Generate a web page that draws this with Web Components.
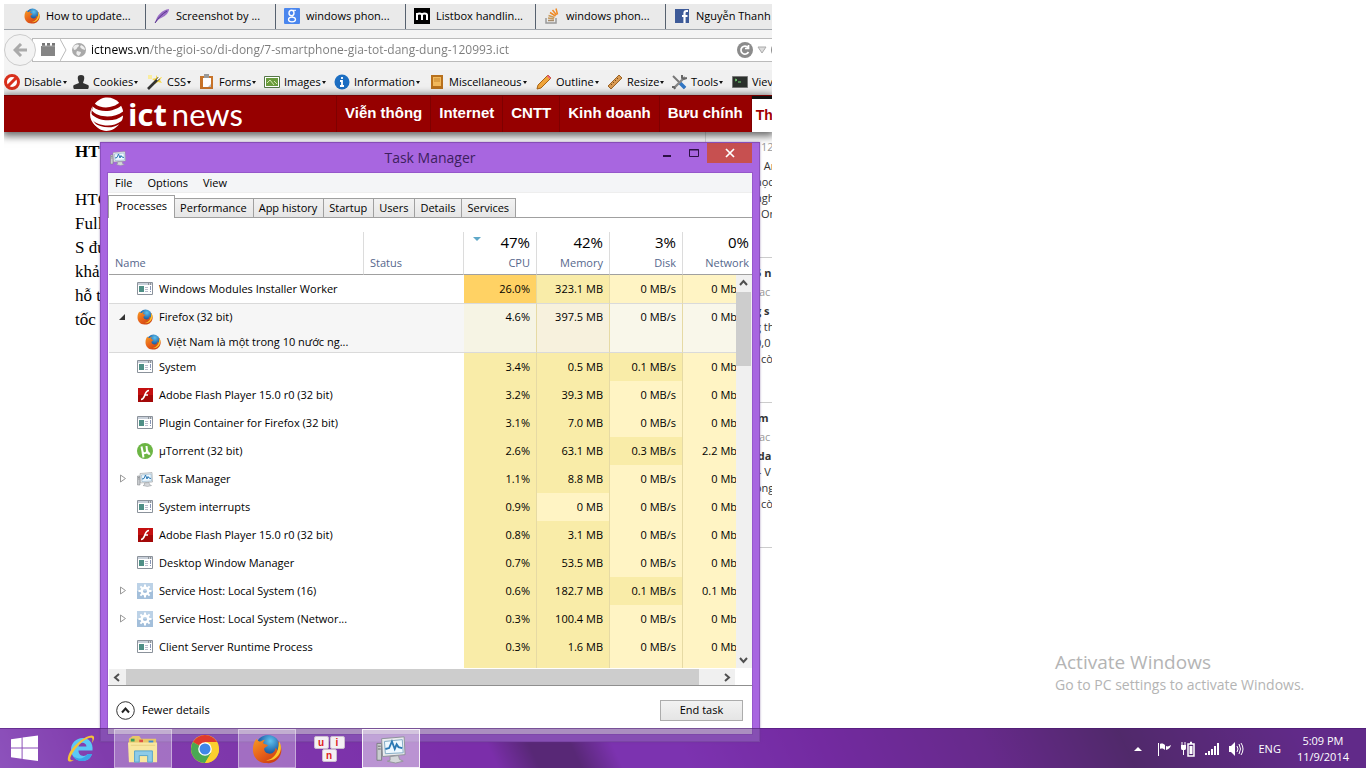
<!DOCTYPE html>
<html lang="en">
<head>
<meta charset="utf-8">
<title>Desktop</title>
<style>
html,body{margin:0;height:100%;background:#fff}
body{font:11px/16px "Open Sans","Noto Sans",sans-serif;color:#000;overflow:hidden}
</style>
</head>
<body>
<win-desktop>
  <browser-window></browser-window>
  <task-manager heading="Task Manager">
    <process-table></process-table>
  </task-manager>
  <activation-note></activation-note>
  <task-bar slot="bar"></task-bar>
</win-desktop>
<script>
const define=(name,html,setup)=>customElements.define(name,class extends HTMLElement{
  connectedCallback(){
    if(this.shadowRoot)return;
    const root=this.attachShadow({mode:'open'});
    const t=document.createElement('template');
    t.innerHTML=typeof html==='function'?html(this):html;
    root.append(t.content.cloneNode(true));
    if(setup)setup(this,root);
  }
});
const reset=':host,*{box-sizing:border-box}button{font:inherit;color:inherit;background:none;border:0;padding:0;margin:0;cursor:default}a{color:inherit;text-decoration:none}';

/* ---------- icons ---------- */
const firefox=`<svg viewBox="0 0 32 32"><defs><radialGradient id="b" cx=".6" cy=".25" r=".8"><stop offset="0" stop-color="#5fc3ee"/><stop offset=".55" stop-color="#2166ac"/><stop offset="1" stop-color="#15245c"/></radialGradient><linearGradient id="f" x1="0" y1="0" x2=".8" y2="1"><stop offset="0" stop-color="#f59a23"/><stop offset=".5" stop-color="#e8641b"/><stop offset="1" stop-color="#c93a10"/></linearGradient></defs><circle cx="17" cy="14" r="13" fill="url(#b)"/><path d="M5 5c1 2 2 3 4 3 2-1 3-2 5-2-2 2-2 3-2 4 2 1 4 1 5 2-1 2-4 2-4 4 0 3 3 5 6 5 4 0 6-3 6-6 1 0 2 2 2 3 2-3 2-7 0-11 4 4 5 9 4 13-2 8-9 12-16 11C6 31 1 24 1 17c0-5 1-9 4-12z" fill="url(#f)"/><path d="M29 8c3 5 2 11-1 15-3 4-8 6-13 5 8-1 13-7 14-20z" fill="#fbc52c"/></svg>`;
const exe=`<svg viewBox="0 0 16 16"><path d="M.5 1.500h15v12H.5z" fill="#fff" stroke="#8b929b"/><path d="M1 2h14v2H1z" fill="#c9d0da"/><path d="M11 3h1m1 0h1" stroke="#555"/><path d="M2 5h5v6H2z" fill="#4f8f86"/><path d="M8 6.500h3M8 8.500h3M8 10.500h3" stroke="#bbc"/><path d="M13.500 5v4m0 1v1" stroke="#8795b5"/></svg>`;
const monitor=`<svg viewBox="0 0 32 32"><path d="M1 10h5v18H1z" fill="#c9cccf" stroke="#7b7e82"/><path d="M2 13h3M2 16h3" stroke="#666"/><path d="M6 5l24-2 1 19-24 2z" fill="#e9ebed" stroke="#8b9197"/><path d="M9 8l19-2 1 14-19 1z" fill="#eef8ff" stroke="#7fa9c4"/><path d="M10 16l4-1 3-7 3 8 2-5 2 3 4 1" fill="none" stroke="#2c79b4" stroke-width="2"/><path d="M15 24l9-1 1 4 4 2-8 2-9-2 3-1z" fill="#d4d7da" stroke="#92969a"/></svg>`;
const gear=`<svg viewBox="0 0 16 16"><path d="M0 0h16v16H0z" fill="#a3bfdb"/><path d="M0 0h16v8H0z" fill="#bcd2e7"/><circle cx="8" cy="8" r="3.300" fill="none" stroke="#fff" stroke-width="2.400"/><path d="M8 1.500v2.500m0 8v2.500M1.500 8H4m8 0h2.500M3.400 3.400l1.800 1.800m5.600 5.600l1.800 1.800m0-9.200l-1.800 1.800m-5.600 5.600l-1.800 1.800" stroke="#fff" stroke-width="2"/></svg>`;
const icons={
firefox,exe,monitor,gear,
flash:`<svg viewBox="0 0 16 16"><path d="M1 1h15v14H1z" fill="#c40f10"/><path d="M1 8h15v7H1z" fill="#a30808"/><path d="M12 3.500c-3 0-3.500 3-4.500 5.500S6 12.500 4 12.500M8 8h3" fill="none" stroke="#fff" stroke-width="1.700"/></svg>`,
utorrent:`<svg viewBox="0 0 16 16"><circle cx="8" cy="8" r="8" fill="#6cb544"/><path d="M4.500 3.500l1 5c.5 2.500 4.500 2 4.500-.5l-.5-5m.7 4.500c.3 2 1.500 3.500 3 3.300M5.500 9l1 5.500" fill="none" stroke="#fff" stroke-width="2"/></svg>`,
feather:`<svg viewBox="0 0 16 16"><path d="M1 15C3 7 8 2 15 1c0 4-4 7-6 8-2 1-4 2-5 3z" fill="#9b6fc6"/><path d="M1 15C4 10 8 6 13 3" stroke="#54308a" fill="none"/></svg>`,
google:`<svg viewBox="0 0 16 16"><rect width="16" height="16" rx="1" fill="#4a86ee"/><ellipse cx="7.500" cy="5" rx="2.500" ry="2.700" fill="none" stroke="#fff" stroke-width="1.400"/><path d="M9 2.300h3M9 7.500c-2 1 0 1.500 1 2.500" stroke="#fff" fill="none"/><ellipse cx="8" cy="11.500" rx="3.500" ry="2.300" fill="none" stroke="#fff" stroke-width="1.300"/></svg>`,
mlogo:`<svg viewBox="0 0 16 16"><path d="M0 0h16v16H0z"/><path d="M3 12V5m0 2c0-2 5-2 5 0v5m0-5c0-2 5-2 5 0v5" stroke="#fff" stroke-width="2" fill="none"/></svg>`,
stack:`<svg viewBox="0 0 16 16"><path d="M2 10v5h10v-5" fill="none" stroke="#999" stroke-width="1.500"/><path d="M4 12.500h6" stroke="#a78b68" stroke-width="1.500"/><path d="M4 10l6 1M4.500 7.500l6 2" stroke="#c99a5a" stroke-width="1.500"/><path d="M6 4.500l5.500 3.500M8.500 2l4 5M12 .5l1.500 6" stroke="#f08a24" stroke-width="1.500"/></svg>`,
facebook:`<svg viewBox="0 0 16 16"><path d="M1 1h14v14H1z" fill="#3d5a98"/><path d="M14 3h-1.500c-1.500 0-2 .8-2 2v10M8 8h5.500" stroke="#fff" stroke-width="2.200" fill="none"/></svg>`,
puzzle:`<svg viewBox="0 0 16 16"><path d="M1 4h14v10H1z" fill="#858585"/><path d="M2 1h3v3H2zm5 0h3v3H7zm5 0h3v3h-3z" fill="#777"/><path d="M2 4h13" stroke="#aaa"/></svg>`,
globe:`<svg viewBox="0 0 16 16"><circle cx="8" cy="8" r="7" fill="#a9a9a9"/><path d="M2 5c2-3 5-3 6-2 0 2-2 2-2 3S4 8 3 8zm8-2c3 1 4 3 4 5l-3-1-2-2zM6 9l4 1c0 2-2 3-2 4C5 13 5 11 6 9z" fill="#eee"/></svg>`,
disable:`<svg viewBox="0 0 16 16"><circle cx="8" cy="8" r="6.500" fill="#fff" stroke="#d8301c" stroke-width="3"/><path d="M3.500 12.500l9-9" stroke="#d8301c" stroke-width="3"/></svg>`,
cookies:`<svg viewBox="0 0 16 16"><path d="M8 1c5 0 3 5 2 8l5 2c1 0 1 3 0 4H1c-1-1-1-4 0-4l5-2C5 6 3 1 8 1z" fill="#333"/></svg>`,
css:`<svg viewBox="0 0 16 16"><path d="M9 1l2 3 4-1-2 3 2 3-4-1-3 2V7L5 5l4-1z" fill="#f7d847"/><path d="M1 1h4v4H1z" fill="#f9ec9f"/><path d="M1 15L12 4" stroke="#333" stroke-width="2.600"/><path d="M10 6l3-3" stroke="#fff" stroke-width="1.500"/></svg>`,
forms:`<svg viewBox="0 0 16 16"><path d="M1 2h13v13H1z" fill="#c77329"/><path d="M4 4h8v9H4z" fill="#fff"/><path d="M5 0h5v4H5z" fill="#999"/><path d="M9 13l3-3v3z" fill="#bbb"/></svg>`,
images:`<svg viewBox="0 0 16 16"><path d="M.5 2.500h15v11H.5z" fill="#fff" stroke="#557748"/><path d="M2 4h12v8H2z" fill="#6a9c3d"/><path d="M3 9l3-3 4 5m0-4l3 3" stroke="#d4e8b0" fill="none"/></svg>`,
info:`<svg viewBox="0 0 16 16"><circle cx="8" cy="8" r="7.500" fill="#1c6ec2"/><path d="M8 3v2M6 7h2v5M6 12h4" stroke="#fff" stroke-width="1.800" fill="none"/></svg>`,
misc:`<svg viewBox="0 0 16 16"><path d="M2 1h12v14H2z" fill="#b8711d"/><path d="M4 3h8v9H4z" fill="#f2b95c"/><path d="M5 5h6M5 7h6" stroke="#c8862d"/></svg>`,
outline:`<svg viewBox="0 0 16 16"><path d="M1 15l1-4L12 1l3 3L5 14z" fill="#f0a53a" stroke="#a96516"/><path d="M11 2l3 3 1-1-3-3z" fill="#e58"/></svg>`,
resize:`<svg viewBox="0 0 16 16"><path d="M1 12L12 1l3 3L4 15z" fill="#d99a52" stroke="#9c6426"/><path d="M4 10l1 1m1-3l1 1m1-3l1 1m1-3l1 1" stroke="#7a4c17"/></svg>`,
tools:`<svg viewBox="0 0 16 16"><path d="M2 2l12 12" stroke="#777" stroke-width="2"/><path d="M9 9l5 5" stroke="#3277c5" stroke-width="3.500"/><path d="M14 3L3 14" stroke="#888" stroke-width="2.400"/><path d="M11 1v3l2 1 3-1M1 13h2l1 2" stroke="#666" stroke-width="2" fill="none"/></svg>`,
view:`<svg viewBox="0 0 16 16"><path d="M.5 2.500h15v11H.5z" fill="#2b302c" stroke="#777"/><path d="M3 5l2 1-2 1M6 8h3" stroke="#7d7" fill="none"/></svg>`,
winlogo:`<svg viewBox="0 0 28 28"><path d="M0 4.500l11-1.600V13H0zM12 2.700L28 .5V13H12zM0 14h11v10.500L0 23zM12 14h16v13l-16-2.200z" fill="#fff"/></svg>`,
ie:`<svg viewBox="0 0 30 30"><path d="M21.500 20c-1.500 2.500-6 2.800-8 0-1-1.500-1-3-1-3.500h14c1-8-4-12.500-10-12.500S5 9 5 15.500 10 27 16 27c5 0 8.500-2.500 10-7zM12.500 12.500c.5-5 7.500-5 8 0z" fill="#5cc8f6" fill-rule="evenodd"/><path d="M21.500 20h4.500c-1.500 4.500-5 7-10 7-4 0-7.500-2-9-5 5 4 11 3 14.500-2z" fill="#3aa4e8"/><path d="M26 9c4-6 2-9-3-7C16 4 6 13 3 20c-3 8 0 9 5 6-4 1-5-1-2-6C10 13 17 6 23 4c4-1 4 1 3 5z" fill="#f6c337"/></svg>`,
explorer:`<svg viewBox="0 0 32 30"><path d="M1 4l4-3h7l2 3h16v24H1z" fill="#e8c767"/><path d="M3 4h4v3H3z" fill="#39a05a"/><path d="M12 5h4v3h-4z" fill="#e05242"/><path d="M22 6h5v3h-5z" fill="#3c8bd0"/><path d="M0 8h31v21H1z" fill="#f9e7a0"/><path d="M7 29V17h19v12h-5v-7h-9v7z" fill="#8ecbe8" stroke="#54a3cd"/><path d="M3 11h26" stroke="#e7cf80"/></svg>`,
chrome:`<svg viewBox="0 0 30 30"><circle cx="15" cy="15" r="14" fill="#fbd02e"/><path d="M15 15L2.900 8A14 14 0 0 1 27.100 8H15z" fill="#df3a2d"/><path d="M15 15L2.900 8A14 14 0 0 0 15 29l6-10z" fill="#4aa853"/><path d="M15 8h12.100L29 15c0 8-6 14-14 14l6-10z" fill="#fbd02e"/><circle cx="15" cy="15" r="6.800" fill="#fff"/><circle cx="15" cy="15" r="5.500" fill="#3f86e8"/></svg>`,
flag:`<svg viewBox="0 0 16 16"><path d="M2.500 2v13" stroke="#fff"/><path d="M4 3c2-1 4 0 5 1v5C8 8 6 7 4 8zM10 5c2 1 3 0 5-1-1 3-2 4-5 5z" fill="#fff"/></svg>`,
battery:`<svg viewBox="0 0 16 16"><path d="M8 3h6v12H8zM10 1.500h2" fill="none" stroke="#fff" stroke-width="1.500"/><path d="M9.500 5h3v8h-3zM1 4h5v3c0 2-1 2-2 2v5H3V9C2 9 1 9 1 7z" fill="#fff"/><path d="M2 1v3m3-3v3" stroke="#fff"/></svg>`,
signal:`<svg viewBox="0 0 16 16"><path d="M1 12h2v2H1zm3-2h2v4H4zm3-2h2v6H7zm3-3h2v9h-2zm3-3h2v12h-2z" fill="#fff"/></svg>`,
volume:`<svg viewBox="0 0 16 16"><path d="M1 5h2l4-4v14l-4-4H1z" fill="#fff"/><path d="M9 5q2 3 0 6m2-8q3 5 0 10m2-11q4 6 0 12" fill="none" stroke="#fff"/></svg>`,
reload:`<svg viewBox="0 0 16 16"><circle cx="8" cy="8" r="8" fill="#8b8b8b"/><path d="M11 5.500A4 4 0 1 0 11.500 10M11.500 3v3.500H8" fill="none" stroke="#fff" stroke-width="1.700"/></svg>`
};
define('app-icon',el=>`<style>:host{display:inline-block;flex:none;width:var(--icon,16px);height:var(--icon,16px)}svg{display:block;width:100%;height:100%}</style>${icons[el.getAttribute('name')]||''}`);

/* ---------- desktop ---------- */
define('win-desktop',`<style>${reset}
:host{display:flex;flex-direction:column;height:100vh;position:relative;overflow:hidden;background:#fff}
main{flex:1;position:relative}
</style><main><slot></slot></main><slot name="bar"></slot>`);

define('activation-note',`<style>
:host{position:absolute;right:56px;bottom:33px;width:255px;white-space:nowrap;color:#b4b4b4}
h2,p{margin:0;font-weight:400}h2{font-size:19px;line-height:26px}p{font-size:14px;line-height:20px}
</style><h2>Activate Windows</h2><p>Go to PC settings to activate Windows.</p>`);

/* ---------- browser ---------- */
define('browser-tab',el=>`<style>${reset}
:host{display:block;flex:0 0 130px}
:host(:last-of-type){flex:1 1 0;min-width:0}
button{display:flex;align-items:center;gap:6px;width:100%;height:25px;padding:0 0 1px 8px;border-right:1px solid #56616f;white-space:nowrap}
:host(:last-of-type) button{border-right:0}
</style><button role="tab"><app-icon name="${el.getAttribute('icon')}"></app-icon><slot></slot></button>`);

define('tool-item',el=>`<style>${reset}
:host{display:block}
button{display:flex;align-items:center;gap:4px;height:24px;white-space:nowrap}
.t{display:flex;align-items:center;gap:1px}
.t::after{content:"";border:2px solid transparent;border-top:3px solid #111;border-bottom:0}
:host([icon=view]) .t::after{display:none}
</style><button><app-icon name="${el.getAttribute('icon')}"></app-icon><span class="t"><slot></slot></span></button>`);

define('browser-window',`<style>${reset}
:host{display:block;position:absolute;left:4px;top:4px;bottom:0;width:768px;overflow:hidden}
.tabs{display:flex;padding-left:12px;background:#eaeaea;border-bottom:1px solid #a3a8ae}
nav.url{display:flex;align-items:center;height:40px;background:#f4f4f4}
.back{display:grid;place-items:center;width:32px;height:32px;border:1px solid #ccc;border-radius:50%;background:#f3f3f3;z-index:1;flex:none}
.back svg{width:14px;height:14px}
.box{flex:1;display:flex;align-items:center;height:24px;margin-left:-4px;padding-left:7px;margin-right:-8px;border:1px solid #bbb;background:#fff;gap:4px}
.box app-icon:last-child{margin-right:-8px}
.sep{width:7px;height:22px;flex:none}
input{flex:1;min-width:0;border:0;outline:0;padding:0;height:20px;font:inherit;font-size:12px;line-height:20px;background:linear-gradient(90deg,#000 58px,#7b7b7b 58px) text;-webkit-text-fill-color:transparent}
.drop{width:10px;height:8px}
.tools{display:grid;grid-template-columns:69px 74px 52px 65px 70px 95px 107px 71px 64px 61px 60px;height:25px;background:#f0f0f0}
header{display:flex;height:37px;background:#960000;border-top:1px solid #740000;position:relative;z-index:1;box-shadow:0 2px 8px 2px rgba(0,0,0,.6)}
.logo{display:flex;align-items:center;flex:none;width:333px;padding-left:85px;gap:4px;color:#fff;border-right:1px solid #7f0000}
.logo svg{width:35px;height:35px;flex:none}
.logo span{display:flex;gap:5px}
.logo b{font:700 31px/36px "Open Sans",sans-serif}
.logo i{font:400 31px/36px Lato,sans-serif}
header a.n{font:700 15px/34px "Liberation Sans",Arial,sans-serif;color:#fff;padding:0 8px;border-right:1px solid #7f0000;white-space:nowrap;flex:none}
header a.n.on{flex:1;border-top:3px solid #111;border-right:0;background:#fff;color:#a00000;font-size:14px;line-height:32px;padding:0 0 0 4px}
.page{display:flex;justify-content:space-between}
article{padding:8px 0 0 71px;font:17px/24px "Liberation Serif",serif;width:330px}
article h1{font:inherit;font-weight:700;margin:0 0 24px}
article p{margin:0}
aside{border-left:1px solid #ddd;width:67px;padding-left:49px;font-size:11px;line-height:16px;color:#333;white-space:nowrap}
aside p{margin:0}
aside section{border-bottom:1px solid #ccc;height:145px;padding-top:7px}
aside section.first{height:126px;padding-top:4px}
aside .d{color:#999;line-height:22px}
aside .n{padding-left:6px}
aside b{display:block}
</style>
<div class="tabs" role="tablist">
<browser-tab icon="firefox">How to update...</browser-tab><browser-tab icon="feather">Screenshot by ...</browser-tab><browser-tab icon="google">windows phon...</browser-tab><browser-tab icon="mlogo">Listbox handlin...</browser-tab><browser-tab icon="stack">windows phon...</browser-tab><browser-tab icon="facebook">Nguyễn Thanh</browser-tab></div>
<nav class="url"><button class="back" aria-label="Back"><svg viewBox="0 0 14 14"><path d="M8 1L2 7l6 6M2 7h12" fill="none" stroke="#aaa" stroke-width="3"/></svg></button>
<div class="box"><app-icon name="puzzle"></app-icon><svg class="sep" viewBox="0 0 7 22"><path d="M0 0l6 11-6 11" fill="none" stroke="#bbb"/></svg><app-icon name="globe"></app-icon>
<input aria-label="Address" value="ictnews.vn/the-gioi-so/di-dong/7-smartphone-gia-tot-dang-dung-120993.ict">
<app-icon name="reload"></app-icon><svg class="drop" viewBox="0 0 10 8"><path d="M1 1h8L5 7z" fill="#ddd" stroke="#aaa"/></svg><app-icon name="reload"></app-icon></div></nav>
<div class="tools"><tool-item icon="disable">Disable</tool-item><tool-item icon="cookies">Cookies</tool-item><tool-item icon="css">CSS</tool-item><tool-item icon="forms">Forms</tool-item><tool-item icon="images">Images</tool-item><tool-item icon="info">Information</tool-item><tool-item icon="misc">Miscellaneous</tool-item><tool-item icon="outline">Outline</tool-item><tool-item icon="resize">Resize</tool-item><tool-item icon="tools">Tools</tool-item><tool-item icon="view">Viev</tool-item></div>
<header><a class="logo" href="#"><svg viewBox="0 0 36 36"><path d="M6 7C13-2 25-1 31 6c-5 5-18 7-25 1z" fill="#fff"/><path d="M4 10c8 7 22 5 29-1 1 2 2 4 2 6-9 7-25 7-32-1zM2 17c8 9 25 9 33 2 0 3-1 5-2 6-9 7-25 5-31-3zM4 26c8 6 20 7 27 2-7 9-20 10-27-2z" fill="#fff"/><path d="M4 9C0 20 4 30 18 34 6 33-4 22 4 9z" fill="#fff"/></svg><span><b>ict</b><i style="font-style:normal">news</i></span></a>
<a class="n" href="#">Viễn thông</a><a class="n" href="#">Internet</a><a class="n" href="#">CNTT</a><a class="n" href="#">Kinh doanh</a><a class="n" href="#">Bưu chính</a><a class="n on" href="#">Th</a></header>
<div class="page"><article><h1>HTC</h1><p>HTC</p><p>Full</p><p>S đư</p><p>khả</p><p>hỗ tr</p><p>tốc</p></article>
<aside><section class="first"><p class="d n">12</p><p class="n">&nbsp;An</p><p>học</p><p>ngh</p><p class="n">On</p></section>
<section><b>5 n</b><p class="d">tac</p><b>g s</b><p>g th</p><p>0,0</p><p class="n">cò</p></section>
<section><b>&nbsp;m</b><p class="d">tac</p><b>&nbsp;da</b><p>&nbsp;- V</p><p>ong</p><p class="n">cò</p></section></aside></div>`);

/* ---------- task manager ---------- */
define('process-table',`<style>${reset}
:host{display:block}
.view{position:relative;overflow:hidden;padding-left:1px}
table{width:647px;table-layout:fixed;border-collapse:separate;border-spacing:0;white-space:nowrap}
th{height:43px;padding:0 6px 3px;border-bottom:1px solid #a0a0a0;font-weight:400;color:#56678c;text-align:left;vertical-align:bottom;border-right:1px solid #dcdcdc}
th.num{text-align:right;position:relative}
th big{display:block;font-size:15px;line-height:20px;color:#000;margin-bottom:3px}
th.sort::before{content:"";position:absolute;left:9px;top:5px;border:4px solid transparent;border-top-color:#5fa8c8;border-bottom:0}
td{height:28px;padding:0 6px;text-align:right}
td.num{background:#fff4c4;border-right:1px solid #e6daa4}
td.m{background:#f9eca8}td.h{background:#ffd264}
td.name{text-align:left;padding:0}
td.name div{display:flex;align-items:center;padding-left:28px;gap:6px;position:relative}
tr.open td{border-top:1px solid #dadada;padding-bottom:2px;background:#f6f6f6}
tr.child td{height:22px;vertical-align:top;border-bottom:1px solid #dadada;background:#f6f6f6}
tr.child td.name div{padding-left:36px;height:21px}
tr.open td.c,tr.child td.c{background:#f6f4e4}tr.open td.e,tr.child td.e{background:#f7f1dd}tr.open td.d,tr.child td.d{background:#f9f7ea}
tr.tail td{height:7px}
.x{position:absolute;left:9px;top:3px;width:9px;height:9px}
.x svg{display:block;width:9px;height:9px}
.bar{display:flex;background:#f0f0f0}
.bar button{display:grid;place-items:center;width:17px;height:16px}
.bar button svg{width:9px;height:9px}
.v{position:absolute;right:0;top:43px;bottom:0;width:16px;flex-direction:column}
.v i{height:74px;background:#cdcdcd;margin:0 1px 0 0}.v i+*{margin-top:auto}
.v button{width:15px;height:17px}
.hrow{margin:1px 17px 0 1px;height:16px}
.hrow i{flex:1;margin-right:19px;background:#cdcdcd}
</style>
<div class="view"><table><colgroup><col style="width:255px"><col style="width:100px"><col style="width:73px"><col style="width:73px"><col style="width:73px"><col style="width:73px"></colgroup>
<thead><tr><th>Name</th><th>Status</th><th class="num sort"><big>47%</big>CPU</th><th class="num"><big>42%</big>Memory</th><th class="num"><big>3%</big>Disk</th><th class="num"><big>0%</big>Network</th></tr></thead><tbody></tbody></table>
<div class="bar v"><button aria-label="Scroll up"><svg viewBox="0 0 9 9"><path d="M1 6l3.500-4L8 6" fill="none" stroke="#505050" stroke-width="2"/></svg></button><i></i><button aria-label="Scroll down"><svg viewBox="0 0 9 9"><path d="M1 3l3.500 4L8 3" fill="none" stroke="#505050" stroke-width="2"/></svg></button></div></div>
<div class="bar hrow"><button aria-label="Scroll left"><svg viewBox="0 0 9 9"><path d="M6 1L2 4.500 6 8" fill="none" stroke="#505050" stroke-width="2"/></svg></button><i></i><button aria-label="Scroll right"><svg viewBox="0 0 9 9"><path d="M3 1l4 3.500L3 8" fill="none" stroke="#505050" stroke-width="2"/></svg></button></div>`,
(el,root)=>{
  const rows=[
   ['exe','Windows Modules Installer Worker','26.0%','323.1 MB','0','0','h'],
   ['firefox','Firefox (32 bit)','4.6%','397.5 MB','0','0','open'],
   ['firefox','Việt Nam là một trong 10 nước ng...','','','','','child'],
   ['exe','System','3.4%','0.5 MB','0.1','0'],
   ['flash','Adobe Flash Player 15.0 r0 (32 bit)','3.2%','39.3 MB','0','0'],
   ['exe','Plugin Container for Firefox (32 bit)','3.1%','7.0 MB','0','0'],
   ['utorrent','µTorrent (32 bit)','2.6%','63.1 MB','0.3','2.2'],
   ['monitor','Task Manager','1.1%','8.8 MB','0','0','more'],
   ['exe','System interrupts','0.9%','0 MB','0','0'],
   ['flash','Adobe Flash Player 15.0 r0 (32 bit)','0.8%','3.1 MB','0','0'],
   ['exe','Desktop Window Manager','0.7%','53.5 MB','0','0'],
   ['gear','Service Host: Local System (16)','0.6%','182.7 MB','0.1','0.1','more'],
   ['gear','Service Host: Local System (Networ...','0.3%','100.4 MB','0','0','more'],
   ['exe','Client Server Runtime Process','0.3%','1.6 MB','0','0']];
  const arrow={open:'<path d="M7 2v6H1z" fill="#333"/>',more:'<path d="M2.500 1v7l5-3.500z" fill="none" stroke="#999"/>'};
  root.querySelector('tbody').innerHTML=rows.map(([ic,name,cpu,mem,disk,net,k=''])=>`<tr class="${k}"><td class="name"><div>${arrow[k]?`<button class="x" aria-label="Expand"><svg viewBox="0 0 9 9">${arrow[k]}</svg></button>`:''}<app-icon name="${ic}"></app-icon><span>${name}</span></div></td><td></td><td class="num c ${k==='h'?'h':'m'}">${cpu}</td><td class="num e ${mem==='0 MB'?'':'m'}">${mem}</td><td class="num d ${disk>0?'m':''}">${disk&&disk+' MB/s'}</td><td class="num d">${net&&net+' Mbps'}</td></tr>`).join('')+'<tr class="tail"><td></td><td></td><td class="num m"></td><td class="num m"></td><td class="num"></td><td class="num"></td></tr>';
});

define('task-manager',el=>`<style>${reset}
:host{display:block;position:absolute;left:100px;top:142px;width:660px;background:#a866e0;border:1px solid #8b50bd;padding:0 7px 7px;box-shadow:0 0 2px rgba(80,40,120,.5)}
.title{display:grid;grid-template-columns:1fr auto 1fr;align-items:center;height:30px;color:#3d1f5e}
.title app-icon{margin-left:2px}
h1{margin:0;font-size:14px;line-height:20px;font-weight:400}
.ctl{display:flex;justify-content:flex-end;align-self:start}
.ctl button{display:grid;place-items:center;width:27px;height:20px}
.ctl .close{width:45px;background:#c75050}
.ctl svg{width:12px;height:12px}
.client{background:#fff;outline:1px solid #9557cb;color:#000}
.menu{display:flex;gap:15px;height:20px;padding:0 7px;background:#f4f5f7;align-items:center;border-bottom:1px solid #eee}
.tabs{display:flex;align-items:flex-end;height:25px;margin-bottom:14px;border-bottom:1px solid #a0a0a0}
.tabs button{height:19px;margin-left:-1px;padding:0 5px;border:1px solid #a0a0a0;border-bottom:0;background:linear-gradient(#f2f2f2,#e6e6e6);white-space:nowrap}
.tabs .on{height:23px;margin:0 0 -1px 0;padding:0 7px 2px;background:#fff}
.tabs .on~button{flex:0 1 auto;padding:0 6px 0 5px}
.foot{display:flex;align-items:center;justify-content:space-between;height:49px;padding:0 9px 0 8px;border-top:1px solid #8f8f8f}
.few{display:flex;align-items:center;gap:7px}.few svg{width:19px;height:19px}
.end{width:83px;height:21px;border:1px solid #acacac;background:linear-gradient(#f2f2f2,#e5e5e5)}
</style>
<div class="title"><app-icon name="monitor"></app-icon><h1>${el.getAttribute('heading')}</h1>
<div class="ctl"><button aria-label="Minimize"><svg viewBox="0 0 12 12"><path d="M2 9h8" stroke="#2d1145" stroke-width="2"/></svg></button><button aria-label="Maximize"><svg viewBox="0 0 12 12"><path d="M1.500 2.500h9v7h-9zM1 3h10" fill="none" stroke="#2d1145"/></svg></button><button class="close" aria-label="Close"><svg viewBox="0 0 12 12"><path d="M2 2l8 8m0-8l-8 8" stroke="#fff" stroke-width="1.700"/></svg></button></div></div>
<div class="client"><div class="menu"><button>File</button><button>Options</button><button>View</button></div>
<div class="tabs"><button class="on">Processes</button><button>Performance</button><button>App history</button><button>Startup</button><button>Users</button><button>Details</button><button>Services</button></div>
<slot></slot>
<div class="foot"><button class="few"><svg viewBox="0 0 19 19"><circle cx="9.500" cy="9.500" r="8.800" fill="none" stroke="#333"/><path d="M6 11.500l3.500-4 3.500 4" fill="none" stroke="#222" stroke-width="2"/></svg>Fewer details</button><button class="end">End task</button></div></div>`);

/* ---------- taskbar ---------- */
define('task-button',el=>`<style>${reset}
:host{display:block;width:58px;height:39px;--icon:30px}
button{display:grid;place-items:center;width:100%;height:100%;border:1px solid transparent}
:host([state=running]) button{background:rgba(255,255,255,.28);border-color:rgba(255,255,255,.4)}
:host([state=active]) button{background:rgba(255,255,255,.48);border-color:rgba(255,255,255,.85)}
</style><button aria-label="${el.getAttribute('icon')||'app'}">${el.hasAttribute('icon')?`<app-icon name="${el.getAttribute('icon')}"></app-icon>`:'<slot></slot>'}</button>`);

define('task-bar',`<style>${reset}
:host{display:block;height:40px;color:#fff;background:linear-gradient(65deg,#b86ff5 0,#9a3ad0 8%,#8c1aca 34%,#8c1aca 36%,#3a0a50 39%,#3a0a50 42%,#9024d8 45%,#9024d8 50%,#7a10b4 60%,#5c0f80 72%,#280c34 82%,#50107c 95%)}
.front{position:relative;height:40px;display:flex;justify-content:space-between;background:rgba(110,62,146,.58);border-top:1px solid rgba(70,20,110,.5)}
.apps{display:flex;gap:4px}
.start{width:48px;display:grid;place-items:center;--icon:27px}
.keys{display:grid;grid-template-columns:15px 15px;justify-content:center;font:700 10px/11px "Liberation Sans",sans-serif;color:#d22;gap:0 1px}
.keys span{background:#f4f0f4;border:1px solid #cbbccf;border-radius:2px;height:13px}
.keys span:last-child{grid-column:1/3;width:15px;margin:0 auto}
.tray{display:flex;align-items:center;gap:8px;padding-right:17px}
.tray time{text-align:center;margin-left:8px}.lang{margin-left:6px}
.up{width:8px;height:6px;margin-right:6px}
</style>
<div class="front"><div class="apps"><button class="start" aria-label="Start"><app-icon name="winlogo"></app-icon></button><task-button icon="ie"></task-button><task-button icon="explorer" state="running"></task-button><task-button icon="chrome"></task-button><task-button icon="firefox" state="running"></task-button><task-button><span class="keys"><span>u</span><span>i</span><span>n</span></span></task-button><task-button icon="monitor" state="active"></task-button></div>
<div class="tray"><svg class="up" viewBox="0 0 8 6"><path d="M0 5l4-4 4 4z" fill="#fff"/></svg><app-icon name="flag"></app-icon><app-icon name="battery"></app-icon><app-icon name="signal"></app-icon><app-icon name="volume"></app-icon><span class="lang">ENG</span><time>5:09 PM<br>11/9/2014</time></div></div>`);
</script>
</body>
</html>
